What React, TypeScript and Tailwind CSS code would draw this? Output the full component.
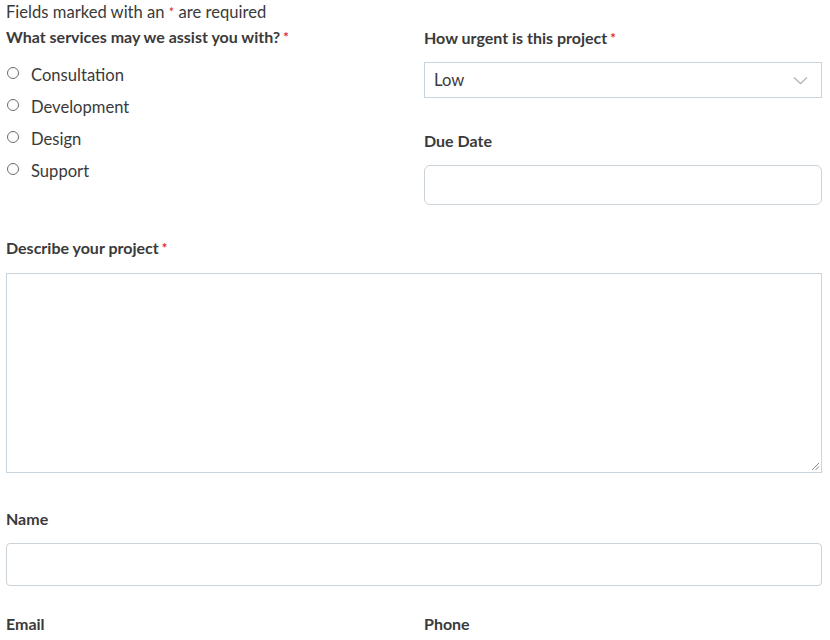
import React from "react";

const Req = () => <span className="text-[#e0262b] text-[13px] align-top ml-[3px]">*</span>;

export default function App() {
  const font = { fontFamily: "Lato, 'Noto Sans', sans-serif" };
  return (
    <div className="w-[830px] h-[640px] overflow-hidden bg-white text-[#3a3a3a]" style={font}>
      <div className="pl-[6px] pr-[8px]">
        <p className="text-[16.6px] leading-[22px] pt-[1px]">
          Fields marked with an <span className="text-[#e0262b] text-[13px] align-top">*</span> are required
        </p>
        <div className="grid grid-cols-2 gap-x-[20px]">
          <div>
            <div className="text-[16px] font-bold leading-[20px] mt-[4px]">
              What services may we assist you with?<Req />
            </div>
            <div className="mt-[18px] flex flex-col gap-[12px]">
              {["Consultation", "Development", "Design", "Support"].map((s) => (
                <label key={s} className="flex items-center h-[20px] text-[16.6px]">
                  <span className="w-[12px] h-[12px] rounded-full border border-[#6b6b6b] ml-[1px] mr-[12px] -mt-[5px]" />
                  {s}
                </label>
              ))}
            </div>
          </div>
          <div>
            <div className="text-[16px] font-bold leading-[20px] mt-[5px]">
              How urgent is this project<Req />
            </div>
            <div className="mt-[14px] h-[36px] border border-[#c9d5de] flex items-center justify-between pl-[9px] pr-[13px] text-[16.6px]">
              <span>Low</span>
              <svg width="15" height="9" viewBox="0 0 15 9" fill="none">
                <path d="M1 1.5 L7.5 7.5 L14 1.5" stroke="#b5b5b5" strokeWidth="1.3" />
              </svg>
            </div>
            <div className="text-[16px] font-bold leading-[20px] mt-[33px]">Due Date</div>
            <div className="mt-[14px] h-[40px] border border-[#ccd3d9] rounded-[6px]" />
          </div>
        </div>
        <div className="text-[16px] font-bold leading-[20px] mt-[33px]">
          Describe your project<Req />
        </div>
        <div className="relative mt-[15px] h-[200px] border border-[#c9d5de]">
          <svg className="absolute right-[1px] bottom-[1px]" width="9" height="9" viewBox="0 0 9 9">
            <path d="M1 8 L8 1 M4.5 8 L8 4.5" stroke="#8a8a8a" strokeWidth="1" />
          </svg>
        </div>
        <div className="text-[16px] font-bold leading-[20px] mt-[36px]">Name</div>
        <div className="mt-[14px] h-[43px] border border-[#ccd3d9] rounded-[4px]" />
        <div className="grid grid-cols-2 gap-x-[20px] mt-[28px]">
          <div className="text-[16px] font-bold leading-[20px]">Email</div>
          <div className="text-[16px] font-bold leading-[20px]">Phone</div>
        </div>
      </div>
    </div>
  );
}
